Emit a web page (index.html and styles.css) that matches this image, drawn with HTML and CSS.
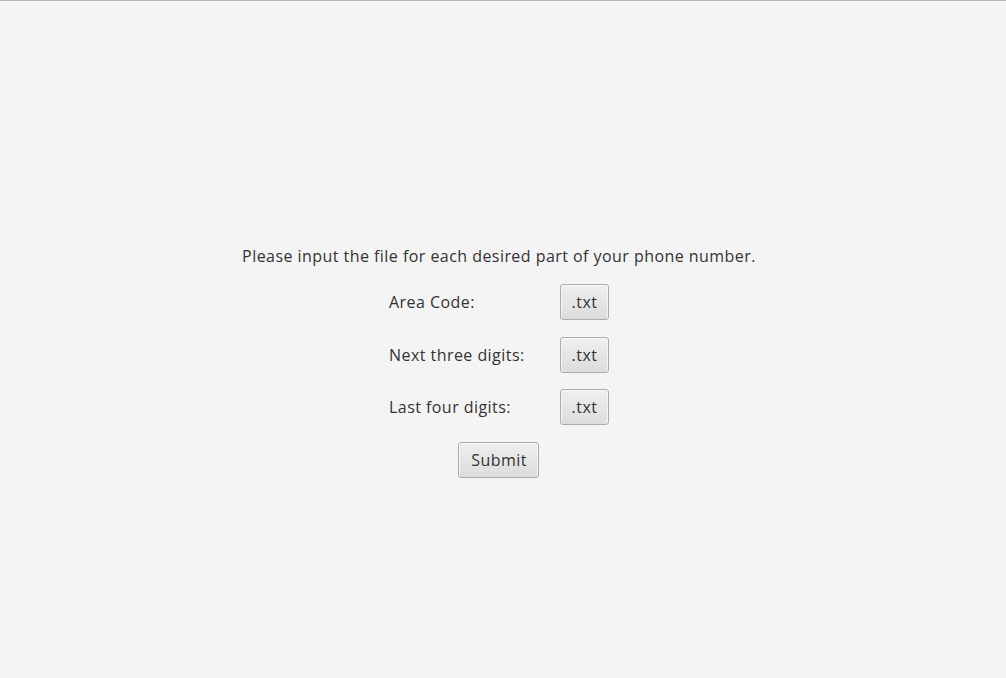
FILE: index.html
```html
<!DOCTYPE html>
<html>
<head>
<meta charset="utf-8">
<link rel="stylesheet" href="styles.css">
</head>
<body>
<div class="window">
  <div class="content">
    <p class="prompt">Please input the file for each desired part of your phone number.</p>
    <div class="grid">
      <span class="label">Area Code:</span>
      <button class="btn file">.txt</button>
      <span class="label">Next three digits:</span>
      <button class="btn file">.txt</button>
      <span class="label">Last four digits:</span>
      <button class="btn file">.txt</button>
    </div>
    <button class="btn submit">Submit</button>
  </div>
</div>
</body>
</html>
```
FILE: styles.css
```css
html, body {
  margin: 0;
  padding: 0;
  height: 100%;
}
body {
  background: #f4f4f4;
  font-family: "Open Sans", "Noto Sans", sans-serif;
  font-size: 16px;
  letter-spacing: 0.45px;
  color: #333333;
}
.window {
  box-sizing: border-box;
  height: 100%;
  border-top: 1px solid #b4b4b4;
  display: flex;
  justify-content: center;
  padding-right: 8px;
}
.content {
  display: flex;
  flex-direction: column;
  align-items: center;
  padding-top: 244px;
}
.prompt {
  margin: 0;
  line-height: 22px;
}
.grid {
  margin-top: 17px;
  display: grid;
  grid-template-columns: 171px 49px;
  row-gap: 16.5px;
  align-items: center;
}
.label {
  line-height: 20px;
}
.btn {
  font-family: inherit;
  font-size: 16px;
  letter-spacing: 0.45px;
  color: #333333;
  height: 36px;
  padding: 0;
  border: 1px solid #acacac;
  border-radius: 3px;
  background: linear-gradient(#efefef, #dcdcdc);
  box-shadow: inset 0 1px 0 #f8f8f8, inset 1px 0 0 #f4f4f4, inset -1px 0 0 #f4f4f4;
}
.file {
  width: 49px;
}
.submit {
  margin-top: 17px;
  width: 81px;
  height: 36px;
}
```
